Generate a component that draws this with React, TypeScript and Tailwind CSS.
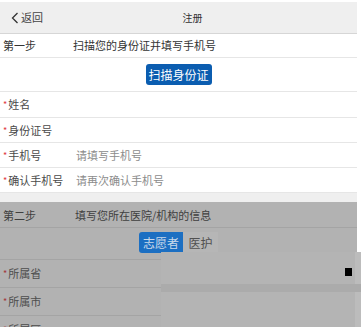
import React from 'react';

const font = "font-['Noto_Sans_CJK_SC','Noto_Sans',sans-serif]";

interface FieldRowProps {
  label: string;
  placeholder?: string;
  dark?: boolean;
  h?: string;
}

const FieldRow: React.FC<FieldRowProps> = ({ label, placeholder, dark, h }) => (
  <div
    className={`flex items-center border-b ${h ?? 'h-[25px]'} ${
      dark ? 'border-[#a4a4a4]' : 'border-[#e6e6e6]'
    }`}
  >
    <div className="flex items-center w-[76px] shrink-0 pl-[3px]">
      <span className={`text-[9px] leading-none ${dark ? 'text-[#a3383a]' : 'text-[#e0393e]'}`}>*</span>
      <span className={`ml-[1px] text-[11px] ${dark ? 'text-[#4d4d4d]' : 'text-[#4a4a4a]'}`}>{label}</span>
    </div>
    {placeholder && <span className="text-[11px] text-[#8c8c8c]">{placeholder}</span>}
  </div>
);

export default function App() {
  return (
    <div className={`relative w-[361px] h-[327px] overflow-hidden bg-white ${font}`}>
      <div className="w-[357px]">
        {/* header */}
        <div className="mt-[2px] h-[32px] bg-[#efefef] border-b border-[#d6d6d6] flex items-center">
          <div className="w-[60px] flex items-center pl-[11px]">
            <svg width="8" height="12" viewBox="0 0 8 12" className="mr-[2px]">
              <path d="M6.5 1 L1.5 6 L6.5 11" fill="none" stroke="#333" strokeWidth="1.3" />
            </svg>
            <span className="text-[11px] text-[#444]">返回</span>
          </div>
          <div className="flex-1 text-center text-[10px] text-[#333]">注册</div>
          <div className="w-[32px]" />
        </div>

        {/* step 1 */}
        <div className="h-[24px] flex items-center border-b border-[#e6e6e6] text-[11px] text-[#333]">
          <span className="w-[73px] pl-[3px]">第一步</span>
          <span>扫描您的身份证并填写手机号</span>
        </div>
        <div className="h-[34px] flex items-center justify-center border-b border-[#e6e6e6]">
          <button className="w-[66px] h-[21px] rounded-[3px] bg-[#0b5db0] text-white text-[12px] leading-none">
            扫描身份证
          </button>
        </div>
        <FieldRow label="姓名" h="h-[26px]" />
        <FieldRow label="身份证号" />
        <FieldRow label="手机号" placeholder="请填写手机号" />
        <FieldRow label="确认手机号" placeholder="请再次确认手机号" />
        <div className="h-[9px] bg-[#efefef]" />

        {/* step 2, under mask */}
        <div className="bg-[#b2b2b2] h-[140px]">
          <div className="h-[26px] flex items-center pt-[2px] border-b border-[#a4a4a4] text-[11px] text-[#3f3f3f]">
            <span className="w-[75px] pl-[3px]">第二步</span>
            <span>填写您所在医院/机构的信息</span>
          </div>
          <div className="h-[32px] flex items-start justify-center pt-[4px] border-b border-[#a4a4a4]">
            <div className="flex">
              <span className="w-[44px] h-[21px] rounded-l-[3px] bg-[#1c6fc2] text-[#c9d9ea] text-[12px] flex items-center justify-center">
                志愿者
              </span>
              <span className="w-[35px] h-[21px] bg-[#b6b6b6] text-[#505050] text-[12px] flex items-center justify-center">
                医护
              </span>
            </div>
          </div>
          <FieldRow label="所属省" dark h="h-[28px]" />
          <FieldRow label="所属市" dark h="h-[28px]" />
          <FieldRow label="所属区" dark h="h-[28px]" />
        </div>
      </div>

      {/* half-drawn picker layer over the mask */}
      <div className="absolute left-[161px] top-[252px] w-[194px] h-[75px] bg-[#b4b4b4]" />
      <div className="absolute left-[355px] top-[252px] w-[6px] h-[75px] bg-[#bcbcbc]" />
      <div className="absolute left-[161px] top-[284px] w-[200px] h-[8px] bg-[#ababab]" />
      <div className="absolute left-[345px] top-[268px] w-[7px] h-[8px] bg-black" />
    </div>
  );
}
